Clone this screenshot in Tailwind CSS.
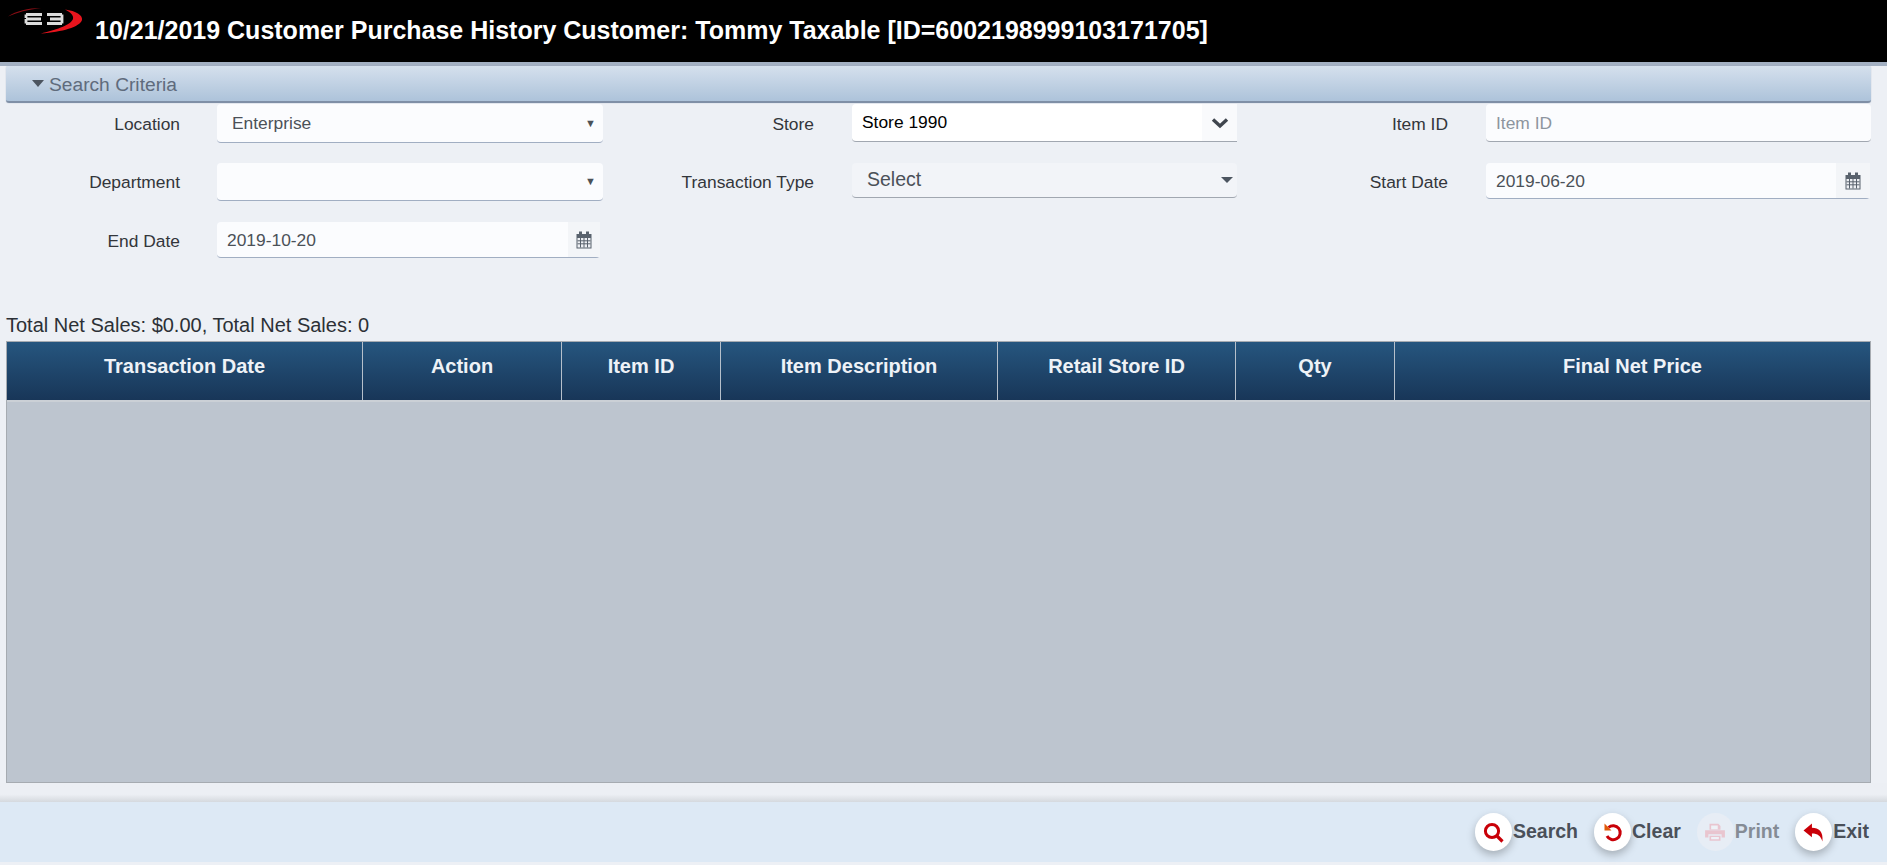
<!DOCTYPE html>
<html lang="en">
<head>
    <meta charset="UTF-8">
    <title>Customer Purchase History</title>
    <script src="https://cdn.jsdelivr.net/npm/@tailwindcss/browser@4"></script>
</head>
<body class="h-[865px] overflow-hidden bg-[#edf0f5] font-['Liberation_Sans',Arial,sans-serif] text-[17.4px] text-[#33363b] flex flex-col">
    <!-- Title bar -->
    <header class="h-[66px] shrink-0 bg-black border-b-4 border-[#a3b0c2] flex items-start">
        <svg class="w-[90px] h-[40px] shrink-0" viewBox="0 0 90 40" fill="none">
            <path d="M8 16.5 C16 11 28 8 41 8 C28 9.5 17 12.5 8 16.5Z" fill="#8a0d14"/>
            <path d="M65 9.5 C76 11 83 15 82 20 C80 27 62 32 41 33.5 C54 30 70 26 73 19 C74 15 70 12 65 9.5Z" fill="#e8141d"/>
            <path d="M26 14.5H42 M26 19H41 M26 23.5H42 M26 14.5V18 M26 19V23.5 M47 14.5H62 M50 19H62 M47 23.5H62 M62 14.5V23.5" stroke="#dcdcdc" stroke-width="2.8"/>
        </svg>
        <h1 class="ml-[5px] mt-[15px] text-[25px] leading-[30px] font-bold text-white whitespace-nowrap">10/21/2019 Customer Purchase History Customer: Tommy Taxable [ID=6002198999103171705]</h1>
    </header>

    <main class="h-[736px] shrink-0 flex flex-col pl-[6px] pr-[16px]">
        <!-- Search criteria -->
        <div class="h-[37px] shrink-0 flex items-center pl-[26px] rounded-[3px] border-b-2 border-[#7f8fa6] bg-gradient-to-b from-[#d5e0ed] to-[#adc3da] shadow-[0_0_1px_#8a99ad] text-[19.2px] text-[#5f6b7c]">
            <svg class="w-[12px] h-[7px] mr-[5px]" viewBox="0 0 12 7"><path d="M0 0H12L6 7Z" fill="#4c5560"/></svg>
            <span class="pt-[3px]">Search Criteria</span>
        </div>

        <form class="mt-[1px] h-[209px] shrink-0 grid grid-cols-[174px_423px_211px_423px_211px_423px] grid-rows-[59px_59px_59px] items-start">
            <label class="mt-[9px] text-right leading-[22px]">Location</label>
            <div class="ml-[37px] h-[39px] bg-[#fbfcfe] rounded-[4px] border-b border-[#a1aec2] flex items-center justify-between pl-[15px] pr-[7px] text-[#4b5158]"><span class="pt-[1px]">Enterprise</span><span class="text-[11px]">▼</span></div>
            <label class="mt-[9px] text-right leading-[22px]">Store</label>
            <div class="ml-[38px] h-[38px] bg-white rounded-l-[4px] border-b border-[#a1a7b0] flex items-stretch text-black">
                <span class="flex-1 pl-[10px] pt-[5px]">Store 1990</span>
                <span class="w-[35px] bg-[#f9fafc] flex items-center justify-center">
                    <svg class="w-[18px] h-[12px]" viewBox="0 0 18 12"><path d="M2 2.5L9 9L16 2.5" fill="none" stroke="#40464e" stroke-width="3.4"/></svg>
                </span>
            </div>
            <label class="mt-[9px] text-right leading-[22px]">Item ID</label>
            <div class="ml-[38px] h-[38px] bg-[#fbfcfe] rounded-[4px] border-b border-[#a1a7b0] pl-[10px] pt-[6px] text-[#8d959e]">Item ID</div>

            <label class="mt-[8px] text-right leading-[22px]">Department</label>
            <div class="ml-[37px] h-[38px] bg-[#fbfcfe] rounded-[4px] border-b border-[#a1aec2] flex items-center justify-end pr-[7px] text-[#4b5158]"><span class="text-[11px]">▼</span></div>
            <label class="mt-[8px] text-right leading-[22px]">Transaction Type</label>
            <div class="ml-[38px] h-[35px] bg-[#f2f4f8] rounded-[4px] border-b border-[#a1a7b0] flex items-center justify-between pl-[15px] pr-[4px] text-[19.5px] text-[#4b5158]">Select
                <svg class="w-[12px] h-[6px]" viewBox="0 0 12 6"><path d="M0 0H12L6 6Z" fill="#4c5560"/></svg>
            </div>
            <label class="mt-[8px] text-right leading-[22px]">Start Date</label>
            <div class="ml-[38px] mr-[1px] h-[36px] bg-[#fbfcfe] rounded-[4px] border-b border-[#a1aec2] flex items-stretch text-[#4b5158]">
                <span class="flex-1 pl-[10px] pt-[5px]">2019-06-20</span>
                <span class="w-[34px] bg-[#f3f5f8] flex items-center justify-center">
                    <svg class="w-[16px] h-[18px]" viewBox="0 0 16 18"><path d="M0.5 3H15.5V17.5H0.5Z M3 0.5H6V4H3Z M10 0.5H13V4H10Z" fill="#59626d"/><path d="M1.5 7H14.5V16.5H1.5Z" fill="#eef0f4"/><path d="M4.5 7V16.5M8 7V16.5M11.5 7V16.5M1.5 9.8H14.5M1.5 12.8H14.5" stroke="#59626d"/></svg>
                </span>
            </div>

            <label class="mt-[8px] text-right leading-[22px]">End Date</label>
            <div class="ml-[37px] mr-[3px] h-[36px] bg-[#fbfcfe] rounded-[4px] border-b border-[#a1aec2] flex items-stretch text-[#4b5158]">
                <span class="flex-1 pl-[10px] pt-[5px]">2019-10-20</span>
                <span class="w-[32px] bg-[#f3f5f8] flex items-center justify-center">
                    <svg class="w-[16px] h-[18px]" viewBox="0 0 16 18"><path d="M0.5 3H15.5V17.5H0.5Z M3 0.5H6V4H3Z M10 0.5H13V4H10Z" fill="#59626d"/><path d="M1.5 7H14.5V16.5H1.5Z" fill="#eef0f4"/><path d="M4.5 7V16.5M8 7V16.5M11.5 7V16.5M1.5 9.8H14.5M1.5 12.8H14.5" stroke="#59626d"/></svg>
                </span>
            </div>
        </form>

        <p class="h-[28px] shrink-0 leading-[24px] text-[#2c3036] text-[20px]">Total Net Sales: $0.00, Total Net Sales: 0</p>

        <!-- Results grid -->
        <div class="h-[442px] shrink-0 flex flex-col border border-[#a6abb1] bg-[#bdc5cf]">
            <div class="h-[60px] shrink-0 grid grid-cols-[356px_199px_159px_277px_238px_159px_1fr] bg-gradient-to-b from-[#26567f] to-[#183658] border-b-2 border-[#cbd0d6] text-[20px] font-bold text-[#eef2f7] text-center leading-[49px]">
                <div class="border-r border-[#b6c0cb]">Transaction Date</div>
                <div class="border-r border-[#b6c0cb]">Action</div>
                <div class="border-r border-[#b6c0cb]">Item ID</div>
                <div class="border-r border-[#b6c0cb]">Item Description</div>
                <div class="border-r border-[#b6c0cb]">Retail Store ID</div>
                <div class="border-r border-[#b6c0cb]">Qty</div>
                <div>Final Net Price</div>
            </div>
        </div>
        <div class="flex-1 -mx-[6px] -mr-[16px] bg-gradient-to-b from-[#eceff4] from-60% to-[#d5d9de]"></div>
    </main>

    <!-- Action bar -->
    <footer class="h-[60px] shrink-0 bg-[#dde9f5] flex items-center justify-end gap-[16px] pr-[18px] text-[19.5px] font-bold text-[#4a5059]">
        <button class="flex items-center gap-[1px]">
            <span class="w-[37px] h-[38px] rounded-full bg-white shadow-[0_4px_8px_rgba(0,0,0,0.25)] flex items-center justify-center">
                <svg class="w-[21px] h-[21px]" viewBox="0 0 21 21" fill="none" stroke="#c90008"><circle cx="9" cy="9" r="6.6" stroke-width="3"/><path d="M13.5 13.5L19.5 19.5" stroke-width="3.2"/></svg>
            </span>
            Search
        </button>
        <button class="flex items-center gap-[1px]">
            <span class="w-[37px] h-[38px] rounded-full bg-white shadow-[0_4px_8px_rgba(0,0,0,0.25)] flex items-center justify-center">
                <svg class="w-[20px] h-[20px]" viewBox="0 0 20 20" fill="none"><path d="M5.5 5.5 A7 7 0 1 1 4 14" stroke="#c90008" stroke-width="3"/><path d="M1.5 1.5V8.5H8.5Z" fill="#e0590a"/></svg>
            </span>
            Clear
        </button>
        <button class="flex items-center gap-[1px] text-[#858c95]">
            <span class="w-[37px] h-[38px] rounded-full bg-[#e7edf5] flex items-center justify-center">
                <svg class="w-[22px] h-[22px]" viewBox="0 0 20 20" fill="none"><path d="M5 2.5H13L15 4.5V8H5Z M1 8.5H19V15H16V12H4V15H1Z M5 13.5H15V18H5Z" fill="#e9c5cf"/><path d="M6.5 4H12.5V7.5H6.5Z M6.5 14.5H13.5V16.5H6.5Z" fill="#eef2f7"/></svg>
            </span>
            Print
        </button>
        <button class="flex items-center gap-[1px]">
            <span class="w-[37px] h-[38px] rounded-full bg-white shadow-[0_4px_8px_rgba(0,0,0,0.25)] flex items-center justify-center">
                <svg class="w-[21px] h-[21px]" viewBox="0 0 20 20"><path d="M0.5 8L8.5 1.5V5.5C15 5.5 19.5 9 18.5 18.5C17 13.5 14 11 8.5 11V14.5Z" fill="#c90008"/></svg>
            </span>
            Exit
        </button>
    </footer>
</body>
</html>
